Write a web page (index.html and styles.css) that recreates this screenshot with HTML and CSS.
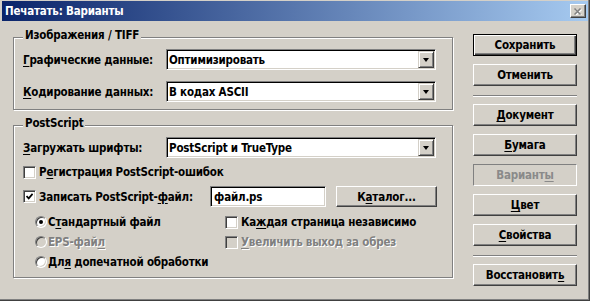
FILE: index.html
```html
<!DOCTYPE html>
<html lang="ru">
<head>
    <meta charset="UTF-8">
    <title>Печатать: Варианты</title>
    <link rel="stylesheet" href="styles.css">
</head>
<body>
    <div class="window">
        <div class="titlebar">
            <span class="title">Печатать: Варианты</span>
            <span class="close-btn">
                <svg width="8" height="7" viewBox="0 0 8 7">
                    <path d="M1.5 1.5 L7.5 7.5 M7.5 1.5 L1.5 7.5" stroke="#fff" stroke-width="1.5"/>
                    <path d="M0.5 0.5 L6.5 6.5 M6.5 0.5 L0.5 6.5" stroke="#808080" stroke-width="1.5"/>
                </svg>
            </span>
        </div>

        <div class="dialog">
            <div class="main">
                <fieldset class="group">
                    <legend>Изображения / TIFF</legend>
                    <div class="field-row">
                        <span class="field-label"><u>Г</u>рафические данные:</span>
                        <div class="combo">
                            <span class="combo-value">Оптимизировать</span>
                            <span class="combo-arrow"></span>
                        </div>
                    </div>
                    <div class="field-row">
                        <span class="field-label"><u>К</u>одирование данных:</span>
                        <div class="combo">
                            <span class="combo-value">В кодах ASCII</span>
                            <span class="combo-arrow"></span>
                        </div>
                    </div>
                </fieldset>

                <fieldset class="group group-ps">
                    <legend>PostScript</legend>
                    <div class="field-row">
                        <span class="field-label"><u>З</u>агружать шрифты:</span>
                        <div class="combo">
                            <span class="combo-value">PostScript и TrueType</span>
                            <span class="combo-arrow"></span>
                        </div>
                    </div>

                    <div class="check-row">
                        <span class="check"></span>
                        <span>Р<u>е</u>гистрация PostScript-ошибок</span>
                    </div>

                    <div class="file-row">
                        <div class="check-row">
                            <span class="check">
                                <svg width="7" height="7" viewBox="0 0 7 7">
                                    <path d="M0.5 3 L2.7 5.3 L6.6 0.9" fill="none" stroke="#000" stroke-width="1.8"/>
                                </svg>
                            </span>
                            <span>Записать PostScript-<u>ф</u>айл:</span>
                        </div>
                        <div class="text-input">файл.ps</div>
                        <div class="btn btn-browse">К<u>а</u>талог...</div>
                    </div>

                    <div class="options">
                        <div class="radio-row">
                            <span class="radio checked"></span>
                            <span>С<u>т</u>андартный файл</span>
                        </div>
                        <div class="check-row">
                            <span class="check"></span>
                            <span>Ка<u>ж</u>дая страница независимо</span>
                        </div>
                        <div class="radio-row disabled">
                            <span class="radio"></span>
                            <span>EPS-фай<u>л</u></span>
                        </div>
                        <div class="check-row disabled">
                            <span class="check"></span>
                            <span><u>У</u>величить выход за обрез</span>
                        </div>
                        <div class="radio-row">
                            <span class="radio"></span>
                            <span>Дл<u>я</u> допечатной обработки</span>
                        </div>
                    </div>
                </fieldset>
            </div>

            <div class="side">
                <div class="btn btn-default">Сохранить</div>
                <div class="btn">Отменить</div>
                <div class="separator"></div>
                <div class="btn"><u>Д</u>окумент</div>
                <div class="btn"><u>Б</u>умага</div>
                <div class="btn btn-current">Вариант<u>ы</u></div>
                <div class="btn"><u>Ц</u>вет</div>
                <div class="btn"><u>С</u>войства</div>
                <div class="separator"></div>
                <div class="btn">Восстановит<u>ь</u></div>
            </div>
        </div>
    </div>
</body>
</html>
```

FILE: styles.css
```css
:root {
    --face: #d4d0c8;
    --shadow: #808080;
    --dark: #404040;
    --light: #ffffff;
}

* {
    margin: 0;
    padding: 0;
    box-sizing: border-box;
}

body {
    background-color: var(--face);
    color: #000;
    font-family: 'DejaVu Sans Condensed', 'DejaVu Sans', sans-serif;
    font-weight: bold;
    font-size: 11.5px;
    letter-spacing: -0.2px;
    line-height: 14px;
}

u {
    text-decoration-thickness: 1px;
    text-underline-offset: 2px;
}

.window {
    width: 590px;
    height: 301px;
    padding: 1px 2px 3px;
    box-shadow: inset -1px -1px var(--dark), inset -2px -2px var(--shadow);
}

/* Title bar */
.titlebar {
    height: 20px;
    display: flex;
    align-items: center;
    justify-content: space-between;
    padding: 0 2px 0 3px;
    background: linear-gradient(to right, #0a246a, #a6caf0);
    color: #fff;
}

.close-btn {
    width: 16px;
    height: 14px;
    display: flex;
    align-items: center;
    justify-content: center;
    background-color: var(--face);
    border: 1px solid;
    border-color: var(--light) var(--dark) var(--dark) var(--light);
    box-shadow: inset -1px -1px var(--shadow);
}

/* Dialog body */
.dialog {
    display: flex;
    gap: 20px;
    padding: 7px 11px 0;
}

.main {
    width: 440px;
    display: flex;
    flex-direction: column;
    gap: 6px;
}

.group {
    border: 1px solid var(--shadow);
    box-shadow: inset 1px 1px var(--light), 1px 1px var(--light);
    padding: 3px 15px 7px 9px;
    min-width: 0;
}

.group legend {
    padding: 0 2px 4px;
    line-height: 14px;
    background-color: var(--face);
}

.group-ps {
    padding-bottom: 5px;
}

.field-row {
    display: flex;
    align-items: center;
    height: 21px;
}

.field-row + .field-row {
    margin-top: 11px;
}

.field-label {
    width: 143px;
}

/* Combo box */
.combo {
    width: 270px;
    height: 21px;
    display: flex;
    align-items: center;
    justify-content: space-between;
    padding-left: 2px;
    background-color: #fff;
    border: 1px solid;
    border-color: var(--shadow) var(--light) var(--light) var(--shadow);
    box-shadow: inset 1px 1px #000, inset -1px -1px var(--face);
}

.combo-arrow {
    width: 16px;
    height: 17px;
    margin-right: 1px;
    display: flex;
    align-items: center;
    justify-content: center;
    background-color: var(--face);
    border: 1px solid;
    border-color: var(--face) var(--dark) var(--dark) var(--face);
    box-shadow: inset 1px 1px var(--light), inset -1px -1px var(--shadow);
}

.combo-arrow::after {
    content: '';
    border-style: solid;
    border-width: 4px 3.5px 0;
    border-color: #000 transparent transparent;
}

/* Checkboxes and radios */
.check-row,
.radio-row {
    display: flex;
    align-items: center;
    gap: 3px;
}

.group-ps > .check-row {
    height: 16px;
    margin-top: 6px;
}

.check {
    width: 13px;
    height: 13px;
    flex-shrink: 0;
    display: flex;
    align-items: center;
    justify-content: center;
    background-color: #fff;
    border: 1px solid;
    border-color: var(--shadow) var(--light) var(--light) var(--shadow);
    box-shadow: inset 1px 1px var(--dark), inset -1px -1px var(--face);
}

.radio {
    width: 12px;
    height: 12px;
    flex-shrink: 0;
    border-radius: 50%;
    display: flex;
    align-items: center;
    justify-content: center;
    background-color: #fff;
    border: 1px solid;
    border-color: var(--shadow) var(--light) var(--light) var(--shadow);
    box-shadow: inset 1px 1px var(--dark), inset -1px -1px var(--face);
}

.radio.checked::after {
    content: '';
    width: 4px;
    height: 4px;
    border-radius: 50%;
    background-color: #000;
}

.disabled {
    color: var(--shadow);
    text-shadow: 1px 1px var(--light);
}

.disabled .check,
.disabled .radio {
    background-color: var(--face);
}

.file-row {
    display: flex;
    align-items: center;
    height: 21px;
    margin-top: 6px;
}

.file-row .check-row {
    width: 189px;
}

.text-input {
    width: 117px;
    height: 21px;
    padding-left: 3px;
    display: flex;
    align-items: center;
    background-color: #fff;
    border: 1px solid;
    border-color: var(--shadow) var(--light) var(--light) var(--shadow);
    box-shadow: inset 1px 1px #000, inset -1px -1px var(--face);
}

.options {
    display: grid;
    grid-template-columns: 190px 1fr;
    grid-auto-rows: 20px;
    align-items: center;
    margin-top: 5px;
    padding-left: 12px;
}

.radio-row {
    gap: 1px;
}

/* Buttons */
.side {
    width: 104px;
    margin-top: 6px;
    display: flex;
    flex-direction: column;
}

.btn {
    height: 22px;
    display: flex;
    align-items: center;
    justify-content: center;
    background-color: var(--face);
    border: 1px solid;
    border-color: var(--light) var(--dark) var(--dark) var(--light);
    box-shadow: inset -1px -1px var(--shadow);
}

.side .btn + .btn {
    margin-top: 8px;
}

.btn-default {
    border: 1px solid #000;
    box-shadow: inset 1px 1px var(--light), inset -1px -1px var(--dark), inset -2px -2px var(--shadow);
}

.btn-current {
    color: #8a8a8a;
    border-color: var(--shadow) var(--light) var(--light) var(--shadow);
    box-shadow: none;
}

.btn-browse {
    width: 102px;
    height: 21px;
    margin-left: 10px;
}

.separator {
    height: 2px;
    margin: 9px 0 7px;
    border-top: 1px solid var(--shadow);
    border-bottom: 1px solid var(--light);
}
```
